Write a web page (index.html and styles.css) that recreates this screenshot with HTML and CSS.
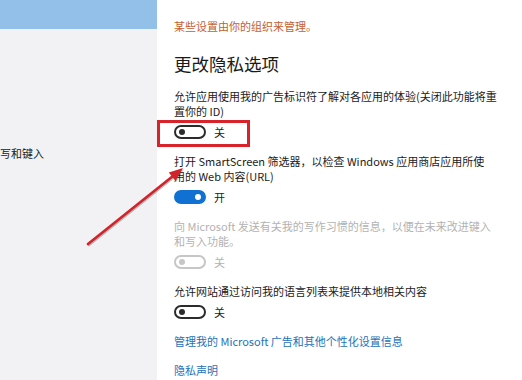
FILE: index.html
```html
<!DOCTYPE html>
<html lang="zh-CN">
<head>
<meta charset="utf-8">
<title>隐私</title>
<link rel="stylesheet" href="styles.css">
</head>
<body>
<div class="screen">
  <aside class="nav">
    <div class="nav-bar"></div>
    <div class="nav-item">写和键入</div>
  </aside>
  <main class="content">
    <p class="notice">某些设置由你的组织来管理。</p>
    <h1 class="title">更改隐私选项</h1>

    <p class="desc">允许应用使用我的广告标识符了解对各应用的体验(关闭此功能将重<br>置你的 ID)</p>
    <div class="toggle-row">
      <span class="toggle"><span class="knob"></span></span>
      <span class="toggle-label">关</span>
    </div>

    <p class="desc">打开 SmartScreen 筛选器，以检查 Windows 应用商店应用所使<br>用的 Web 内容(URL)</p>
    <div class="toggle-row">
      <span class="toggle on"><span class="knob"></span></span>
      <span class="toggle-label">开</span>
    </div>

    <p class="desc disabled">向 Microsoft 发送有关我的写作习惯的信息，以便在未来改进键入<br>和写入功能。</p>
    <div class="toggle-row disabled">
      <span class="toggle"><span class="knob"></span></span>
      <span class="toggle-label">关</span>
    </div>

    <p class="desc">允许网站通过访问我的语言列表来提供本地相关内容</p>
    <div class="toggle-row">
      <span class="toggle"><span class="knob"></span></span>
      <span class="toggle-label">关</span>
    </div>

    <a class="link" href="#">管理我的 Microsoft 广告和其他个性化设置信息</a>
    <a class="link link-last" href="#">隐私声明</a>
  </main>

  <div class="highlight"></div>
  <svg class="arrow" width="522" height="380" viewBox="0 0 522 380">
    <line x1="88" y1="244" x2="173" y2="176" stroke="#d0232a" stroke-width="2.6" stroke-linecap="round"/>
    <polygon points="183,168 175.4,180.8 168.8,172.6" fill="#d0232a"/>
  </svg>
</div>
</body>
</html>
```

FILE: styles.css
```css
* { box-sizing: border-box; }

html, body {
  margin: 0;
  padding: 0;
  background: #ffffff;
}

body {
  font-family: "Noto Sans CJK SC", "Noto Sans", sans-serif;
  font-size: 11px;
  color: #1b1b1b;
}

.screen {
  position: relative;
  display: flex;
  width: 522px;
  height: 380px;
  overflow: hidden;
}

.nav {
  flex: 0 0 157px;
  background: #f2f2f4;
  display: flex;
  flex-direction: column;
}

.nav-bar {
  height: 29px;
  background: #92c0e8;
}

.nav-item {
  margin-top: 117px;
  line-height: 15px;
  white-space: nowrap;
  color: #202020;
}

.content {
  flex: 1;
  padding: 19px 0 0 17px;
  display: flex;
  flex-direction: column;
  align-items: flex-start;
  background: #ffffff;
}

.notice {
  margin: 0;
  line-height: 15px;
  color: #c4602f;
}

.title {
  margin: 18px 0 13px;
  font-size: 17.5px;
  font-weight: normal;
  line-height: 24px;
  color: #1a1a1a;
}

.desc {
  margin: 0;
  line-height: 15px;
  white-space: nowrap;
}

.desc.disabled { color: #b2b2b2; }

.toggle-row {
  display: flex;
  align-items: center;
  height: 20px;
  margin: 3px 0 12px;
}

.toggle {
  width: 32px;
  height: 14px;
  border: 2px solid #2b2b2b;
  border-radius: 7px;
  display: flex;
  align-items: center;
  padding-left: 3px;
}

.knob {
  width: 6px;
  height: 6px;
  border-radius: 50%;
  background: #2b2b2b;
}

.toggle.on {
  background: #1071d3;
  border-color: #1071d3;
  justify-content: flex-end;
  padding: 0 3px 0 0;
}

.toggle.on .knob { background: #ffffff; }

.toggle-label {
  margin-left: 8px;
  line-height: 15px;
}

.toggle-row.disabled .toggle { border-color: #c6c6c6; }
.toggle-row.disabled .knob { background: #c6c6c6; }
.toggle-row.disabled .toggle-label { color: #b2b2b2; }

.link {
  line-height: 15px;
  color: #2472b9;
  text-decoration: none;
}

.link-last { margin-top: 14px; }

.highlight {
  position: absolute;
  left: 157px;
  top: 120px;
  width: 93px;
  height: 27px;
  border: 3px solid #d8232a;
}

.arrow {
  position: absolute;
  left: 0;
  top: 0;
  pointer-events: none;
  filter: drop-shadow(1px 1px 0.6px rgba(0, 0, 0, 0.25));
}
```
